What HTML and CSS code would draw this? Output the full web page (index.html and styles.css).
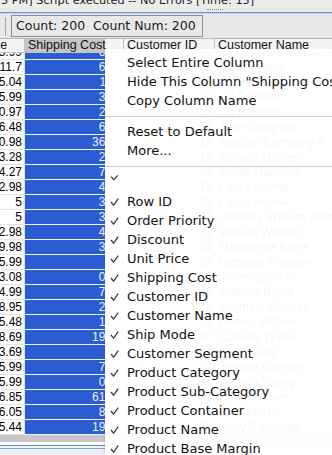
FILE: index.html
```html
<!DOCTYPE html>
<html lang="en">
<head>
  <meta charset="UTF-8" />
  <title>Table Columns</title>
  <link rel="stylesheet" href="styles.css">
</head>
<body>
  <div class="window">

    <!-- console status line, scrolled half out of view -->
    <div class="status"><span>5 PM] Script executed -- No Errors [Time: 15]</span></div>
    <div class="splitter"><div class="grip"></div></div>

    <!-- toolbar -->
    <div class="toolbar">
      <span class="tb-sep"></span>
      <div class="count">Count: 200&nbsp; Count Num: 200</div>
    </div>

    <!-- table, scrolled a little to the right -->
    <div class="grid">
      <div class="grid-inner">
        <div class="head">
          <div class="c c0">Unit Price</div>
          <div class="c c1 pressed">Shipping Cost</div>
          <div class="c c2">Customer ID</div>
          <div class="c c3">Customer Name</div>
        </div>
        <div class="body">
          <div class="rows" id="rows"></div>
        </div>
      </div>
    </div>
    <div class="hscroll"></div>
    <div class="foot"></div>

    <!-- header context menu -->
    <div class="menu">
      <div class="item plain">Select Entire Column</div>
      <div class="item plain">Hide This Column "Shipping Cost"</div>
      <div class="item plain">Copy Column Name</div>
      <div class="menu-sep"></div>
      <div class="item plain">Reset to Default</div>
      <div class="item plain">More...</div>
      <div class="menu-sep"></div>
      <div class="item empty"><svg class="chk" viewBox="0 0 10 7"><path d="M1 2l3 3.5L9 0.5"/></svg></div>
      <div id="cols"></div>
    </div>
  </div>

<script>
const data=[
  ["5.99","6.15","3","Muhammed MacIntyre"],
  ["11.7","6.27","6","Ruben Dartt"],
  ["5.04","11.5","11","Liz Pelletier"],
  ["5.99","3.44","12","Liz Pelletier"],
  ["0.97","2.99","13","Liz Pelletier"],
  ["6.48","6.46","16","Julie Creighton"],
  ["0.98","36.09","17","Sample Company A"],
  ["3.28","2.04","18","Tamara Dahlen"],
  ["4.27","7.12","10","Sarah Ramsey"],
  ["2.98","4.81","18","Laura Hanna"],
  ["5","3.69","18","Laura Hanna"],
  ["5","3.14","21","Anthony William Wahley"],
  ["2.98","4.22","21","William Walden"],
  ["9.98","3.97","24","Marguerite Kane"],
  ["5.99","0.5","26","Deborah Wallace"],
  ["3.08","0.71","27","Jeremiah Abel"],
  ["4.99","7.03","28","Andrew Byrne"],
  ["8.95","2.99","28","Matthew Mitchell"],
  ["5.48","1.99","29","Dennis Walker"],
  ["8.69","19.99","30","Claudia Tyson"],
  ["3.69","0.5","31","Kelly Kang"],
  ["5.99","7.69","33","Jessica Carmen"],
  ["5.99","0.49","34","Joseph Young"],
  ["6.85","61.76","35","Henry Mckee"],
  ["6.05","8.99","36","Ruth Norris"],
  ["5.44","19.99","38","Mary Gallagher"]
];
const cols=["Row ID","Order Priority","Discount","Unit Price","Shipping Cost","Customer ID","Customer Name","Ship Mode","Customer Segment","Product Category","Product Sub-Category","Product Container","Product Name","Product Base Margin"];

const rows=document.getElementById('rows');
data.forEach(r=>{
  const row=document.createElement('div');
  row.className='row';
  row.innerHTML=`<div class="c c0">${r[0]}</div><div class="c c1">${r[1]}</div><div class="c c2">${r[2]}</div><div class="c c3">${r[3]}</div>`;
  rows.appendChild(row);
});

const list=document.getElementById('cols');
cols.forEach(name=>{
  const it=document.createElement('div');
  it.className='item';
  it.innerHTML=`<svg class="chk" viewBox="0 0 10 9"><path d="M1 4.5l3 3.5L9.2 0.8"/></svg><span>${name}</span>`;
  list.appendChild(it);
});
</script>
</body>
</html>
```

FILE: styles.css
```css
*{box-sizing:border-box}
body{
  margin:0;
  font-family:"DejaVu Sans",sans-serif;
  background:#ececec;
  overflow:hidden;
}
.window{position:relative;width:332px;height:455px;overflow:hidden;background:#ececec}

/* status line + splitter */
.status{height:8px;overflow:hidden;font-size:11.3px;color:#1e1e1e;white-space:nowrap;padding-left:1px}
.status span{display:block;line-height:13px;margin-top:-6px}
.splitter{height:5px;padding-top:1px;border-bottom:1px solid #6f95dd;background:#e9e9e9}
.grip{margin-left:207px;width:16px;border-top:1px dotted #8a8a8a}

/* toolbar */
.toolbar{
  height:26px;
  display:flex;
  align-items:center;
  padding-left:5px;
  background:#e8e8e8;
  border-top:1px solid #bcd0f2;
  border-bottom:1px solid #b8b8b8;
}
.tb-sep{width:1px;height:19px;background:#a5a5a5}
.count{
  margin-left:5px;
  width:192px;
  height:22px;
  border:1px solid #8d8d8d;
  padding-left:4px;
  font-size:12.5px;
  line-height:20px;
  color:#1a1a1a;
  white-space:nowrap;
}

/* table */
.grid{height:396px;overflow:hidden;background:#fff;font-family:"Liberation Sans",Arial,sans-serif}
.grid-inner{margin-left:-50px}
.head{display:flex;height:14px;background:#f4f4f4;border-bottom:1px solid #c4c4c4;font-size:12.5px;color:#111;line-height:13px}
.head .c{padding-left:3px;border-right:1px solid #c4c4c4;white-space:nowrap;overflow:hidden}
.head .pressed{background:linear-gradient(to right,#c5c5c5 80px,transparent 80px);padding-left:3px}
.head .c3{border-right:none}

.c{flex:none;overflow:hidden;white-space:nowrap}
.c0{width:75px}
.c1{width:99px}
.c2{width:91px}
.c3{width:200px}

.body{height:382px;overflow:hidden}
.rows{margin-top:-8px}
.row{display:flex;height:15px;font-size:12px;line-height:14px;color:#000}
.row .c{border-bottom:1px solid #e3e3e3}
.row .c0{text-align:right;padding-right:2px;border-right:1px solid #e3e3e3}
/* selected column: only the part left of the popup is painted */
.row .c1{
  background:linear-gradient(to right,#2c5cd4 80px,#fff 80px);
  color:#f2f5fd;
  text-align:right;
  padding-right:2px;
  border-bottom-color:#f4f6fc;
}
.row .c2{text-align:right;padding-right:3px}
.row .c3{padding-left:4px}

.hscroll{height:8px;background:#c7c7c7;border-bottom:1px solid #fff}
.foot{height:20px;background:#ededed;border-top:2px solid #fff;box-shadow:inset 0 1px 0 #5a86da,inset 0 3px 0 #f3f3f3,inset 0 4px 0 #7b9fe2}

/* popup menu, floats above the table */
.menu{
  position:absolute;
  left:105px;
  top:49px;
  width:260px;
  height:430px;
  padding-top:4px;
  background:rgba(255,255,255,.965);
  box-shadow:-1px 1px 2px rgba(0,0,0,.1);
  font-size:13px;
  color:#111;
}
.item{display:flex;align-items:center;height:19px;padding-left:5px;white-space:nowrap}
.item.plain{padding-left:22px}
.item.empty{height:20px;align-items:flex-start;padding-top:3px}
.chk{width:9px;height:8px;margin-right:8px;flex:none;fill:none;stroke:#3a3a3a;stroke-width:1.4}
.item.empty .chk{height:6px}
.menu-sep{height:12px;display:flex;align-items:center}
.menu-sep::before{content:"";display:block;width:100%;height:1px;background:#cfcfcf}
```
